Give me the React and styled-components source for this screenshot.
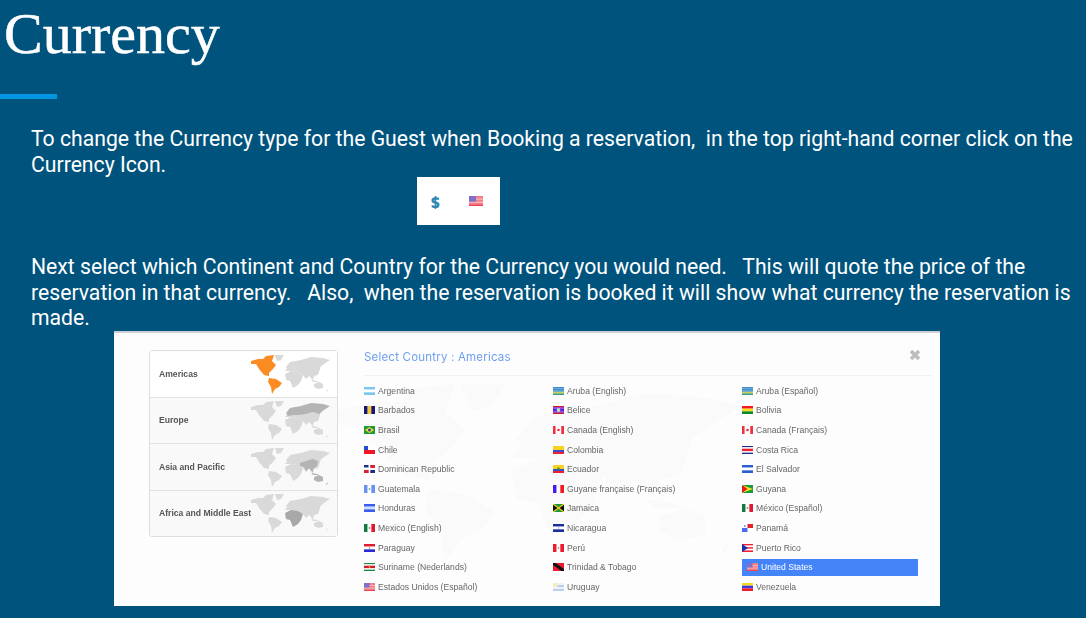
import React from "react";
import styled, { createGlobalStyle } from "styled-components";

const Global = createGlobalStyle`
  html, body { margin: 0; padding: 0; background: #00537d; }
  body { font-family: "Roboto", "Liberation Sans", sans-serif; overflow: hidden; }
`;

const Page = styled.div`
  width: 1086px;
  height: 618px;
  background: #00537d;
  color: #fff;
  display: flex;
  flex-direction: column;
  overflow: hidden;
`;

const Title = styled.h1`
  margin: 0;
  padding: 1px 0 0 4px;
  height: 94px;
  box-sizing: border-box;
  font-family: "Liberation Serif", serif;
  font-weight: 400;
  font-size: 58px;
  line-height: 66px;
  -webkit-text-stroke: 0.5px #fff;
`;

const Accent = styled.div`
  width: 57px;
  height: 5px;
  background: #0096e1;
  flex: none;
`;

const Body = styled.p`
  margin: ${({ $top }) => $top}px 0 0;
  padding: 0 0 0 31px;
  width: 1050px;
  font-size: 21.2px;
  line-height: 25.7px;
  white-space: pre-wrap;
`;

const CurrencyBox = styled.div`
  margin: 0 0 0 417px;
  width: 83px;
  height: 48px;
  background: #fff;
  display: flex;
  align-items: center;
  padding: 0 17px 0 14px;
  box-sizing: border-box;
  justify-content: space-between;
  flex: none;
`;

const Dollar = styled.span`
  color: #2f86b4;
  font-family: "Open Sans", sans-serif;
  font-weight: 800;
  font-size: 15px;
  margin-top: 1px;
`;

const Shot = styled.div`
  position: relative;
  margin: 0 0 0 114px;
  width: 826px;
  height: 275px;
  flex: none;
  box-sizing: border-box;
  background: #fdfdfd;
  border-top: 2px solid #ccd0d4;
  display: flex;
  padding: 17px 8px 0 35px;
  overflow: hidden;
  filter: blur(0.3px);
  font-family: "Liberation Sans", Arial, sans-serif;
`;

const Backdrop = styled.svg`
  position: absolute;
  left: 224px;
  top: 46px;
  width: 408px;
  height: 184px;
`;

const Regions = styled.div`
  width: 189px;
  height: 187px;
  box-sizing: border-box;
  border: 1px solid #dedede;
  border-radius: 3px;
  flex: none;
  display: flex;
  flex-direction: column;
  position: relative;
`;

const RegionRow = styled.div`
  flex: 1;
  display: flex;
  align-items: center;
  justify-content: space-between;
  padding: 0 6px 0 9px;
  font-size: 8.6px;
  font-weight: 700;
  white-space: nowrap;
  color: #555;
  background: ${({ $active }) => ($active ? "#fff" : "#f9f9f9")};
  & + & { border-top: 1px solid #e2e2e2; }
`;

const MapIcon = styled.svg`
  width: 80px;
  height: 40px;
  flex: none;
`;

const Picker = styled.div`
  position: relative;
  margin-left: 26px;
  flex: 1;
`;

const PickerHead = styled.div`
  display: flex;
  justify-content: space-between;
  align-items: flex-start;
  height: 25px;
  border-bottom: 1px solid #f2f2f2;
`;

const PickerTitle = styled.div`
  font-family: "Inter", sans-serif;
  font-size: 11.5px;
  line-height: 14px;
  letter-spacing: 0.2px;
  color: #6d9ff0;
`;

const Close = styled.svg`
  width: 12px;
  height: 12px;
  margin-right: 11px;
  margin-top: -1px;
`;

const Countries = styled.div`
  display: grid;
  grid-template-columns: 189px 189px 176px;
  grid-auto-rows: 19.6px;
  padding-top: 5px;
`;

const Country = styled.div`
  display: flex;
  align-items: center;
  gap: 3px;
  font-size: 8.6px;
  white-space: nowrap;
  color: ${({ $on }) => ($on ? "#fff" : "#666")};
  background: ${({ $on }) => ($on ? "#4484f8" : "transparent")};
  padding-left: ${({ $on }) => ($on ? 5 : 0)}px;
  height: ${({ $on }) => ($on ? 17 : 19.6)}px;
  align-self: center;
`;

const FlagSvg = styled.svg`
  flex: none;
  display: block;
`;

const US = (
  <>
    <rect width="11" height="8" fill="#f27f88" />
    <rect y="2" width="11" height="1" fill="#f7b4b8" />
    <rect y="4.5" width="11" height="1" fill="#f7b4b8" />
    <rect y="7" width="11" height="1" fill="#ef3f50" />
    <rect width="5.5" height="4.5" fill="#7f70cc" />
  </>
);

// stripes: h = rows, v = columns, extra = whatever sits on top
const flags = {
  ar: { h: ["#7cc7f2", "#fff", "#7cc7f2"] },
  aw: { h: ["#3f8fd0", "#3f8fd0", "#3f8fd0", "#c8d050", "#3f9a80"] },
  bb: { v: ["#14147a", "#f6c82c", "#14147a"] },
  bz: { h: ["#d4162a", "#6a1be0", "#6a1be0", "#6a1be0", "#6a1be0", "#d4162a"], extra: <circle cx="5.5" cy="4" r="1.9" fill="#b5e0b5" /> },
  br: { h: ["#1f9a3a"], extra: <><path d="M5.5 1 L10 4 L5.5 7 L1 4Z" fill="#f4dc30" /><circle cx="5.5" cy="4" r="1.5" fill="#2a3f9a" /></> },
  ca: { v: ["#f03040", "#fff", "#fff", "#f03040"], extra: <circle cx="5.5" cy="4" r="1.3" fill="#f03040" /> },
  cl: { h: ["#fff", "#f01525"], extra: <rect width="4" height="4" fill="#2a4bd0" /> },
  co: { h: ["#f8d020", "#f8d020", "#3a4bd0", "#f02030"] },
  do: { h: ["#1a2f8a", "#fff", "#e02030"], extra: <><rect x="4.5" width="2" height="8" fill="#fff" /><rect x="6.5" width="4.5" height="3" fill="#e02030" /><rect x="6.5" y="5" width="4.5" height="3" fill="#1a2f8a" /><rect y="5" width="4.5" height="3" fill="#e02030" /></> },
  ec: { h: ["#f8d020", "#f8d020", "#3a4bd0", "#f02030"], extra: <circle cx="5.5" cy="4" r="1.4" fill="#4a8a3a" /> },
  bo: { h: ["#f01a20", "#f8e020", "#0a8a2a"] },
  cr: { h: ["#1a2f8a", "#fff", "#f02030", "#f02030", "#fff", "#1a2f8a"] },
  sv: { h: ["#2a5fd0", "#fff", "#2a5fd0"] },
  gt: { v: ["#6a90f5", "#fff", "#6a90f5"], extra: <circle cx="5.5" cy="4" r="1" fill="#7ab87a" /> },
  gf: { v: ["#4a1af0", "#fff", "#f01a20"] },
  gy: { h: ["#1a9a3a"], extra: <><path d="M0 0 L11 4 L0 8Z" fill="#f8e020" /><path d="M0 0 L5.5 4 L0 8Z" fill="#e01a20" /></> },
  hn: { h: ["#3a5af0", "#cfe0ff", "#3a5af0"] },
  jm: { h: ["#1a9a3a"], extra: <><path d="M0 0 L5.5 4 L0 8Z M11 0 L5.5 4 L11 8Z" fill="#111" /><path d="M0 0 L11 8 M11 0 L0 8" stroke="#f8d020" strokeWidth="1.2" /></> },
  mx: { v: ["#0f7a40", "#fff", "#e01a30"], extra: <circle cx="5.5" cy="4" r="0.9" fill="#9a8a50" /> },
  ni: { h: ["#1a2f9a", "#fff", "#1a2f9a"], extra: <circle cx="5.5" cy="4" r="0.8" fill="#9ac" /> },
  pa: { h: ["#fff", "#fff"], extra: <><rect x="5.5" width="5.5" height="4" fill="#e8202a" /><rect y="4" width="5.5" height="4" fill="#4a6af0" /><circle cx="2.8" cy="2" r="0.9" fill="#6a8af0" /></> },
  py: { h: ["#e01a30", "#fff", "#2a2ad0"], extra: <circle cx="5.5" cy="4" r="0.8" fill="#6a9a6a" /> },
  pe: { v: ["#ef1a30", "#fff", "#ef1a30"], extra: <circle cx="5.5" cy="4" r="0.8" fill="#4a9a4a" /> },
  pr: { h: ["#ef2030", "#fff", "#ef2030", "#fff", "#ef2030"], extra: <path d="M0 0 L6 4 L0 8Z" fill="#1a2fb0" /> },
  sr: { h: ["#1a8a3a", "#fff", "#d01a30", "#d01a30", "#fff", "#1a8a3a"], extra: <circle cx="5.5" cy="4" r="0.8" fill="#f8d020" /> },
  tt: { h: ["#ef1a30"], extra: <path d="M0 0 L2.5 0 L11 6 L11 8 L8.5 8 L0 2Z" fill="#111" /> },
  uy: { h: ["#eef2fb", "#b9cff0", "#eef2fb", "#b9cff0"], extra: <rect width="4.5" height="4" fill="#f5ecc0" /> },
  ve: { h: ["#f8d820", "#3a3ae0", "#ef1a30"] },
  us: { shapes: US },
};

const Flag = ({ code, w = 11, h = 8 }) => {
  const f = flags[code];
  const rows = f.h || [];
  const cols = f.v || [];
  return (
    <FlagSvg width={w} height={h} viewBox="0 0 11 8" preserveAspectRatio="none">
      {rows.map((c, i) => (
        <rect key={i} y={(i * 8) / rows.length} width="11" height={8 / rows.length} fill={c} />
      ))}
      {cols.map((c, i) => (
        <rect key={i} x={(i * 11) / cols.length} width={11 / cols.length} height="8" fill={c} />
      ))}
      {f.shapes}
      {f.extra}
    </FlagSvg>
  );
};

const continents = {
  americas: [
    "M0 7 L7 5 L12 5 L15 2 L23 1 L21 7 L25 11 L22 15 L18 19 L18 22 L13 21 L8 15 L5 10 L0 10 Z",
    "M18 24 L25 25 L31 29 L28 33 L24 35 L21 40 L20 33 L17 28 Z",
  ],
  greenland: ["M24 1 L33 1 L30 6 L26 7 Z"],
  base: [
    "M34 17 L40 10 L55 8 L70 10 L69 15 L67 21 L63 22 L62 26 L58 22 L55 25 L52 21 L47 18 L40 17 Z",
  ],
  europe: ["M35 13 L39 8 L50 6 L60 3 L72 4 L79 6 L73 10 L68 14 L62 12 L55 14 L48 15 L42 15 L37 16 Z"],
  asia: [
    "M49 16 L55 14 L62 12 L67 14 L66 19 L62 22 L62 26 L58 21 L55 24 L53 20 L49 19 Z",
    "M60 26 L66 27 L68 28 L62 28 Z",
    "M63 30 L68 28 L72 30 L72 34 L67 35 L63 33 Z",
    "M75 37 L77 35 L76 38 Z",
  ],
  africa: ["M34 20 L40 17 L47 18 L52 21 L50 27 L47 31 L42 34 L39 27 L35 26 Z"],
};

const World = ({ active, color = "#b4b4b4" }) =>
  Object.keys(continents).map((k) =>
    continents[k].map((d, i) => (
      <path key={k + i} d={d} fill={k === active ? color : "#d9d9d9"} />
    ))
  );

const regions = [
  { name: "Americas", key: "americas", color: "#fb8c24" },
  { name: "Europe", key: "europe" },
  { name: "Asia and Pacific", key: "asia" },
  { name: "Africa and Middle East", key: "africa", color: "#a8a8a8" },
];

const countries = [
  ["ar", "Argentina"], ["aw", "Aruba (English)"], ["aw", "Aruba (Español)"],
  ["bb", "Barbados"], ["bz", "Belice"], ["bo", "Bolivia"],
  ["br", "Brasil"], ["ca", "Canada (English)"], ["ca", "Canada (Français)"],
  ["cl", "Chile"], ["co", "Colombia"], ["cr", "Costa Rica"],
  ["do", "Dominican Republic"], ["ec", "Ecuador"], ["sv", "El Salvador"],
  ["gt", "Guatemala"], ["gf", "Guyane française (Français)"], ["gy", "Guyana"],
  ["hn", "Honduras"], ["jm", "Jamaica"], ["mx", "México (Español)"],
  ["mx", "Mexico (English)"], ["ni", "Nicaragua"], ["pa", "Panamá"],
  ["py", "Paraguay"], ["pe", "Perú"], ["pr", "Puerto Rico"],
  ["sr", "Suriname (Nederlands)"], ["tt", "Trinidad & Tobago"], ["us", "United States"],
  ["us", "Estados Unidos (Español)"], ["uy", "Uruguay"], ["ve", "Venezuela"],
];

export default function App() {
  return (
    <Page>
      <Global />
      <Title>Currency</Title>
      <Accent />
      <Body $top={27}>
        {"To change the Currency type for the Guest when Booking a reservation,  in the top right-hand corner click on the Currency Icon."}
      </Body>
      <CurrencyBox>
        <Dollar>$</Dollar>
        <Flag code="us" w={14} h={10} />
      </CurrencyBox>
      <Body $top={28.5}>
        {"Next select which Continent and Country for the Currency you would need.   This will quote the price of the reservation in that currency.   Also,  when the reservation is booked it will show what currency the reservation is made."}
      </Body>
      <Shot>
        <Backdrop viewBox="0 0 80 40" preserveAspectRatio="none">
          {Object.values(continents).flat().map((d, i) => (
            <path key={i} d={d} fill="#fafafa" />
          ))}
        </Backdrop>
        <Regions>
          {regions.map((r, i) => (
            <RegionRow key={r.name} $active={i === 0}>
              {r.name}
              <MapIcon viewBox="0 0 80 40">
                <World active={r.key} color={r.color} />
              </MapIcon>
            </RegionRow>
          ))}
        </Regions>
        <Picker>
          <PickerHead>
            <PickerTitle>Select Country : Americas</PickerTitle>
            <Close viewBox="0 0 12 12">
              <path d="M2 2 L10 10 M10 2 L2 10" stroke="#bdbdbd" strokeWidth="3.6" />
            </Close>
          </PickerHead>
          <Countries>
            {countries.map(([code, name]) => (
              <Country key={name} $on={name === "United States"}>
                <Flag code={code} />
                {name}
              </Country>
            ))}
          </Countries>
        </Picker>
      </Shot>
    </Page>
  );
}
